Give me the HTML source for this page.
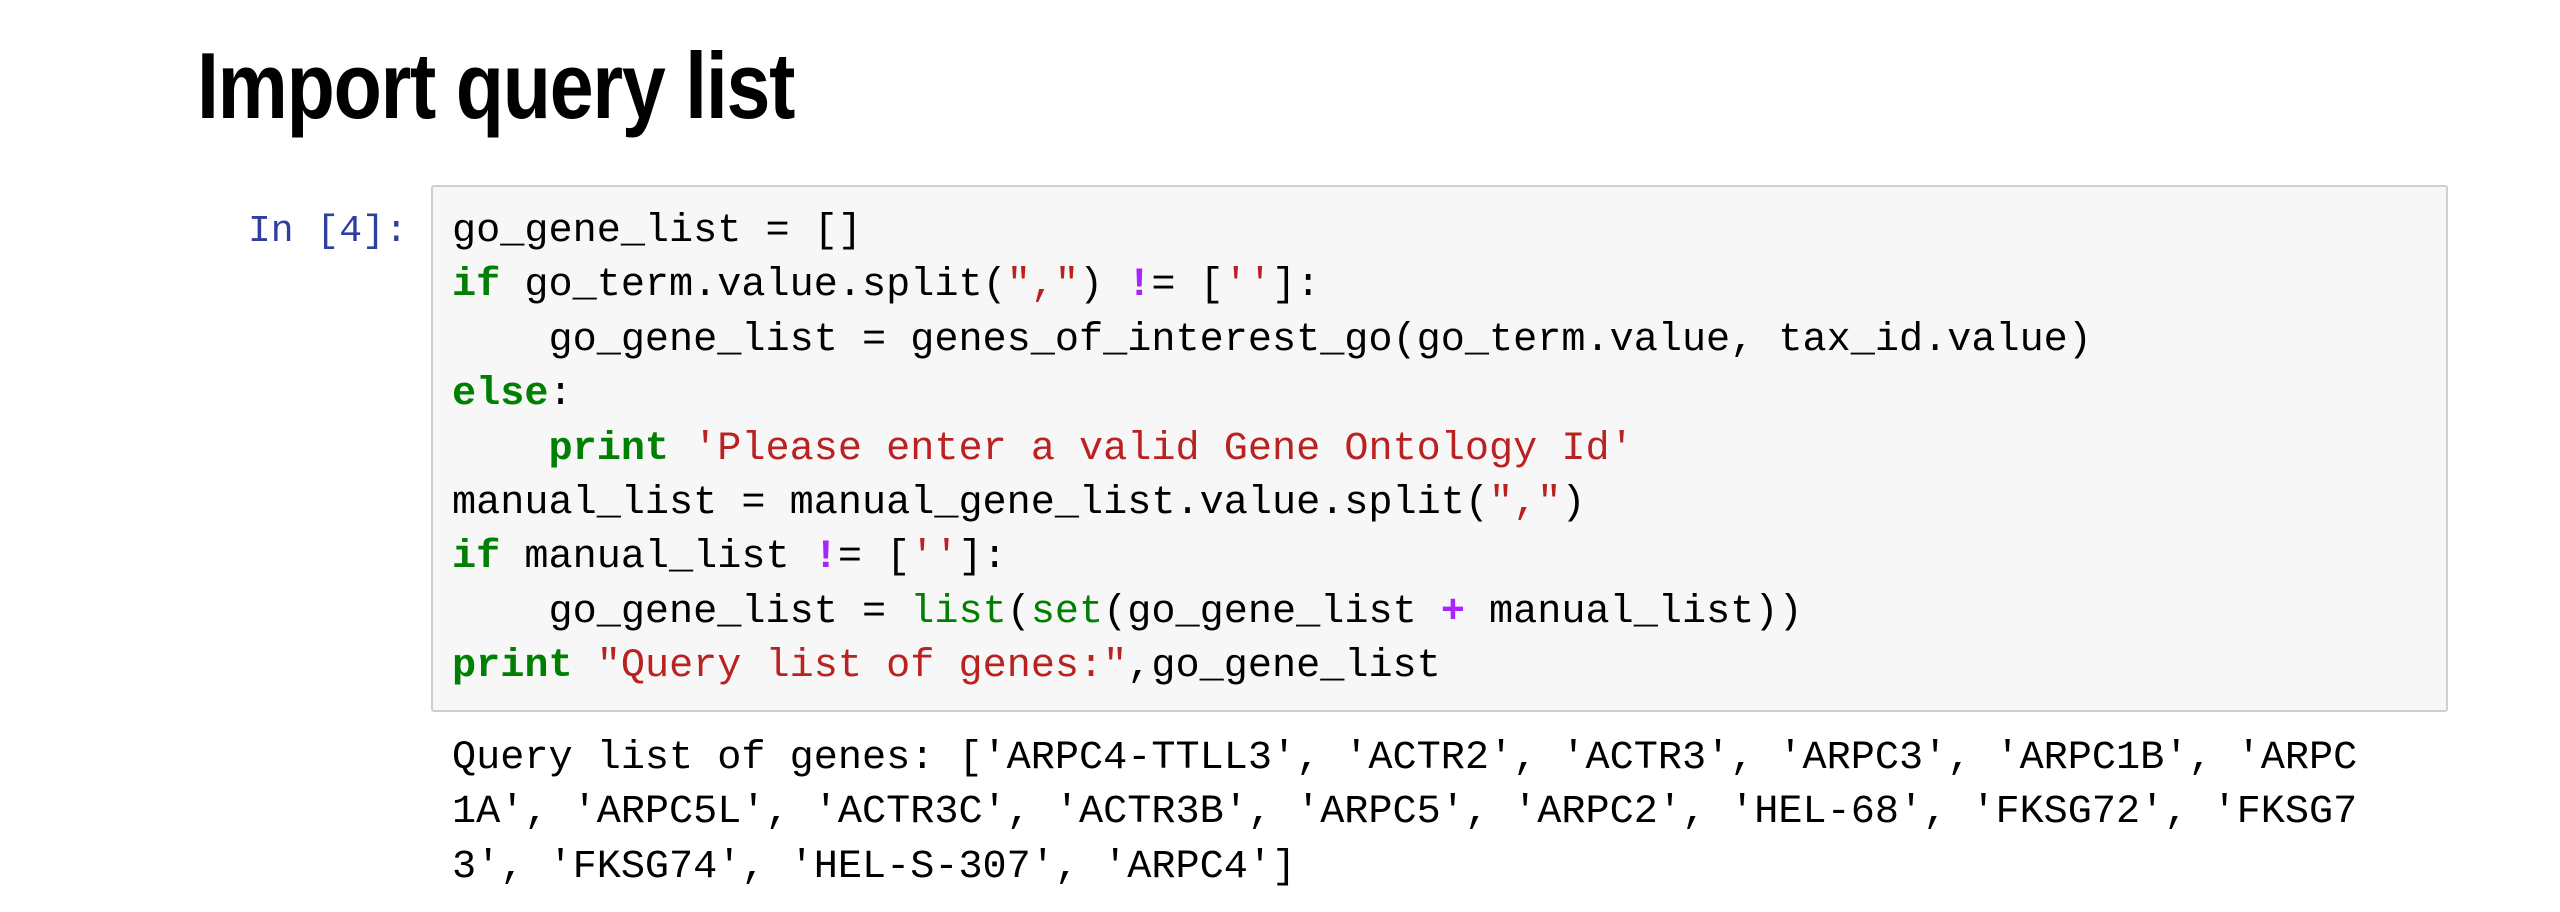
<!DOCTYPE html>
<html><head><meta charset="utf-8"><style>
html,body{margin:0;padding:0;background:#fff;width:2560px;height:912px;overflow:hidden}
h1{position:absolute;left:197px;top:26px;margin:0;font-family:"Liberation Sans",sans-serif;font-weight:bold;font-size:94px;line-height:120px;color:#000;letter-spacing:-1.5px;transform:scaleX(0.84);transform-origin:0 0;white-space:nowrap}
.prompt{position:absolute;left:248px;top:205px;font-family:"Liberation Mono",monospace;font-size:38px;line-height:54px;color:#303F9F}
.box{position:absolute;left:431px;top:185px;width:2017px;height:527px;background:#f7f7f7;border:2px solid #cfcfcf;border-radius:3px;box-sizing:border-box}
pre{margin:0;font-family:"Liberation Mono",monospace;font-size:40.2px;line-height:54.4px;color:#000}
.code{position:absolute;left:452px;top:205px}
.out{position:absolute;left:452px;top:732px}
.k{color:#008000;font-weight:bold}.s{color:#BA2121}.o{color:#AA22FF;font-weight:bold}.b{color:#008000}
</style></head><body>
<h1>Import query list</h1>
<div class="prompt">In [4]:</div>
<div class="box"></div>
<pre class="code">go_gene_list = []
<span class="k">if</span> go_term.value.split(<span class="s">","</span>) <span class="o">!</span>= [<span class="s">''</span>]:
    go_gene_list = genes_of_interest_go(go_term.value, tax_id.value)
<span class="k">else</span>:
    <span class="k">print</span> <span class="s">'Please enter a valid Gene Ontology Id'</span>
manual_list = manual_gene_list.value.split(<span class="s">","</span>)
<span class="k">if</span> manual_list <span class="o">!</span>= [<span class="s">''</span>]:
    go_gene_list = <span class="b">list</span>(<span class="b">set</span>(go_gene_list <span class="o">+</span> manual_list))
<span class="k">print</span> <span class="s">"Query list of genes:"</span>,go_gene_list</pre>
<pre class="out">Query list of genes: ['ARPC4-TTLL3', 'ACTR2', 'ACTR3', 'ARPC3', 'ARPC1B', 'ARPC
1A', 'ARPC5L', 'ACTR3C', 'ACTR3B', 'ARPC5', 'ARPC2', 'HEL-68', 'FKSG72', 'FKSG7
3', 'FKSG74', 'HEL-S-307', 'ARPC4']</pre>
</body></html>
